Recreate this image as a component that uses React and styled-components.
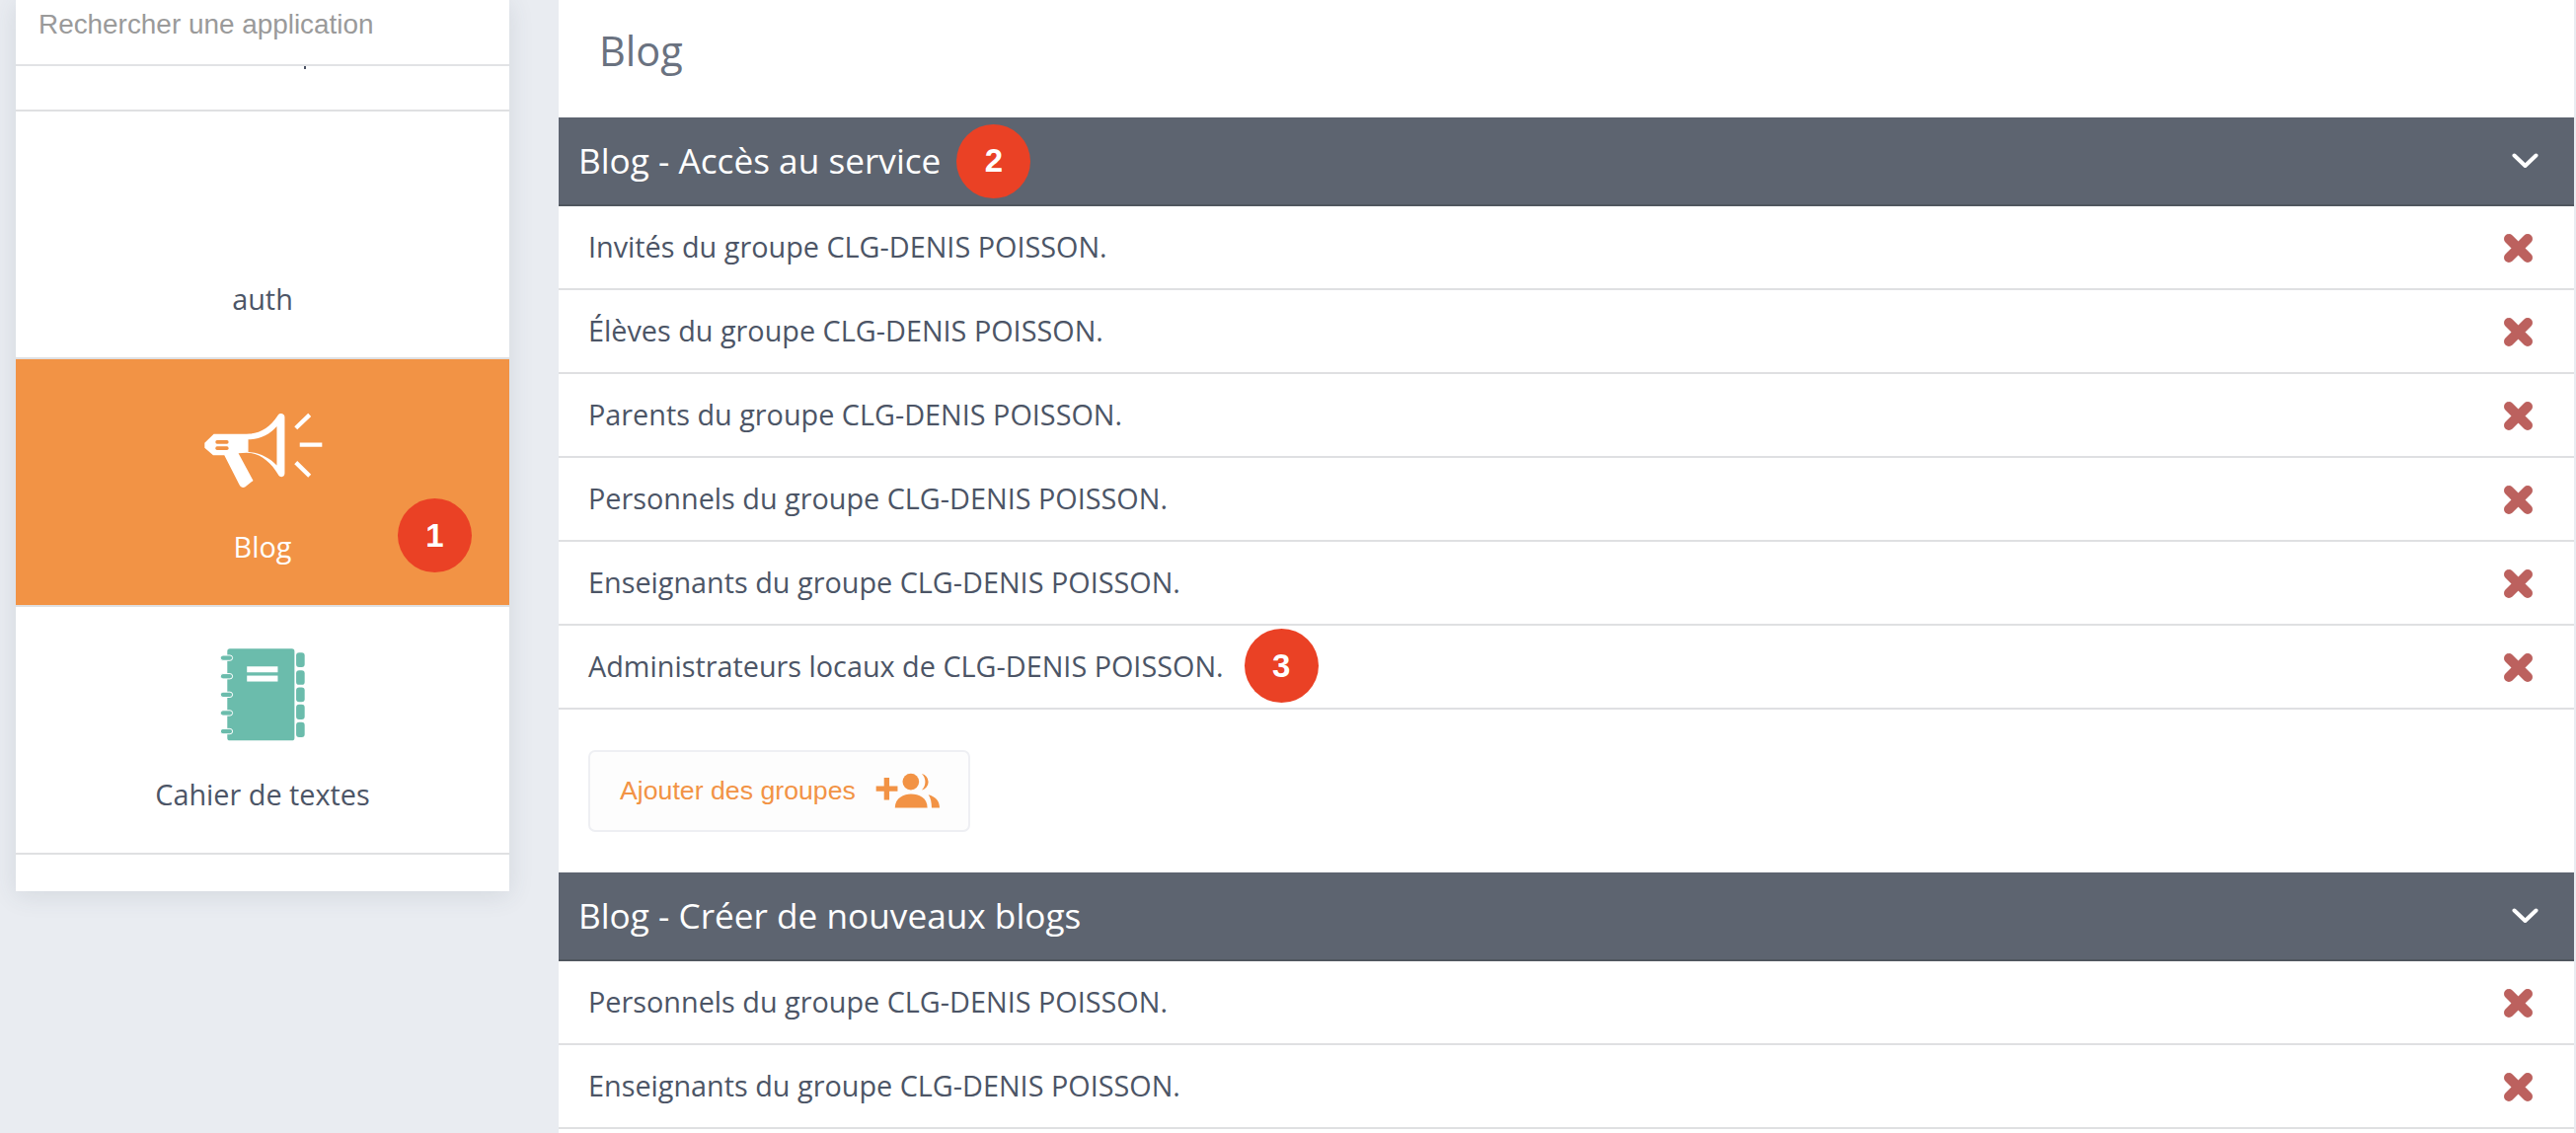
import styled, { createGlobalStyle } from 'styled-components';

const GlobalStyle = createGlobalStyle`
    html, body {
        margin: 0;
        padding: 0;
        background: #e9ecf1;
        font-family: "Open Sans", "Liberation Sans", sans-serif;
    }
`;

const Page = styled.div`
    display: flex;
    align-items: flex-start;
    height: 1148px;
    padding: 0 2px 0 16px;
    box-sizing: border-box;
    overflow: hidden;
`;

const Sidebar = styled.aside`
    flex: 0 0 500px;
    height: 903px;
    background: #fff;
    box-shadow: 0 4px 24px rgba(60, 70, 90, 0.12);
`;

const Search = styled.div`
    height: 65px;
    padding-left: 23px;
    border-bottom: 2px solid #e2e3e5;
    font-family: "Liberation Sans", Arial, sans-serif;
    font-size: 27.9px;
    line-height: 49px;
    color: #9a9a9a;
`;

const Strip = styled.div`
    height: 44px;
    border-bottom: 2px solid #dfe0e2;
`;

const ClippedTail = styled.span`
    display: block;
    width: 2px;
    height: 3px;
    margin-left: 292px;
    background: #4a5263;
`;

const AppItem = styled.div`
    position: relative;
    height: 249px;
    border-bottom: 2px solid #dfe0e2;
    display: flex;
    flex-direction: column;
    align-items: center;
    background: ${(p) => (p.$active ? '#f29345' : '#fff')};
    color: ${(p) => (p.$active ? '#fff' : '#4c5566')};
`;

const AppIcon = styled.div`
    height: 172px;
    padding-top: 5px;
    box-sizing: border-box;
    display: flex;
    align-items: center;
    justify-content: center;
`;

const AppLabel = styled.div`
    font-size: 28.8px;
    line-height: 36px;
`;

const Badge = styled.span`
    flex: none;
    display: flex;
    align-items: center;
    justify-content: center;
    width: 75px;
    height: 75px;
    margin-left: ${(p) => p.$gap || 16}px;
    border-radius: 50%;
    background: #ea4125;
    color: #fff;
    font-family: "Liberation Sans", Arial, sans-serif;
    font-weight: 700;
    font-size: 33px;
`;

const CornerBadge = styled(Badge)`
    position: absolute;
    left: 387px;
    top: 141px;
    margin: 0;
`;

const Main = styled.main`
    flex: 1;
    height: 1148px;
    margin-left: 50px;
    background: #fff;
    overflow: hidden;
`;

const Title = styled.h1`
    height: 119px;
    margin: 0;
    padding: 23px 0 0 41px;
    box-sizing: border-box;
    font-size: 41.5px;
    font-weight: 400;
    line-height: 56px;
    color: #6a7280;
`;

const SectionHeader = styled.div`
    height: 90px;
    padding: 0 36px 0 20px;
    box-sizing: border-box;
    display: flex;
    align-items: center;
    background: #5d6470;
    border-bottom: 2px solid #50565f;
    color: #fff;
`;

const SectionTitle = styled.h2`
    margin: 0 0 2px;
    font-size: 35.2px;
    font-weight: 400;
`;

const Chevron = styled.svg`
    margin-left: auto;
`;

const Row = styled.div`
    height: 85px;
    padding: 0 42px 2px 30px;
    box-sizing: border-box;
    display: flex;
    align-items: center;
    border-bottom: 2px solid #dfe0e2;
    font-size: 28.8px;
    color: #4c5566;
`;

const RemoveIcon = styled.svg`
    margin: 3px 0 0 auto;
`;

const Actions = styled.div`
    padding: 41px 30px;
`;

const AddButton = styled.button`
    display: flex;
    align-items: center;
    gap: 19px;
    width: 387px;
    height: 83px;
    padding: 0 0 0 30px;
    box-sizing: border-box;
    border: 2px solid #eeeff3;
    border-radius: 7px;
    background: #fdfdfd;
    color: #f29345;
    font-family: "Liberation Sans", Arial, sans-serif;
    font-size: 26.7px;
`;

const Megaphone = () => (
    <svg width="123" height="90" viewBox="105 53 370 270">
        <path
            fill="#fff"
            fillRule="evenodd"
            d="M140 148 L240 148 C280 148 310 130 335 92 C340 82 356 85 356 96 L356 268 C356 282 340 282 335 270 C315 235 280 205 240 205 L215 207 L260 290 L235 310 C228 313 222 310 218 303 L172 213 L138 213 L112 190 L112 175 Z M245 165 L245 203 C280 205 310 220 332 244 L332 125 C310 150 280 165 245 165 Z"
        />
        <rect x="145" y="167" width="40" height="11" rx="5" fill="#f29345" />
        <rect x="145" y="186" width="40" height="11" rx="5" fill="#f29345" />
        <path
            fill="none"
            stroke="#fff"
            strokeWidth="13"
            d="M390 130 L432 90 M402 181 L470 181 M390 235 L432 276"
        />
    </svg>
);

const Notebook = () => (
    <svg width="92" height="98" viewBox="60 45 275 295">
        <rect x="90" y="52" width="205" height="280" rx="8" fill="#6bbcac" />
        {[80, 136, 192, 248, 304].map((y) => (
            <rect key={y} x="69" y={y - 8} width="37" height="16" rx="8" fill="#6bbcac" stroke="#fff" strokeWidth="3" />
        ))}
        {[[64, 44], [118, 44], [170, 44], [222, 46], [276, 46]].map(([y, h]) => (
            <rect key={y} x="300" y={y} width="26" height={h} rx="9" fill="#6bbcac" />
        ))}
        <rect x="150" y="106" width="94" height="18" fill="#fff" />
        <rect x="150" y="134" width="94" height="18" fill="#fff" />
    </svg>
);

const AddGroups = () => (
    <svg width="67" height="37" viewBox="135 40 200 110" fill="#f29345">
        <path d="M164 55 H180 V80 H205 V96 H180 V122 H164 V96 H140 V80 H164 Z" />
        <circle cx="245" cy="67" r="25" />
        <path d="M197 146 C197 115 225 104 245 104 C270 104 295 115 295 146 Z" />
        <path d="M278 43 A25 25 0 0 1 278 92 C292 80 292 55 278 43 Z" />
        <path d="M298 106 C320 112 332 125 332 146 L308 146 C308 130 305 115 298 106 Z" />
    </svg>
);

const ChevronDown = () => (
    <Chevron width="27" height="16" viewBox="0 0 27 16">
        <path d="M2.5 2.5 L13.5 13 L24.5 2.5" fill="none" stroke="#fff" strokeWidth="4" strokeLinecap="round" strokeLinejoin="round" />
    </Chevron>
);

const Remove = () => (
    <RemoveIcon width="29" height="29" viewBox="0 0 29 29">
        <path d="M5 5 L24 24 M24 5 L5 24" stroke="#bc615e" strokeWidth="10" strokeLinecap="round" />
    </RemoveIcon>
);

const accessGroups = [
    'Invités du groupe CLG-DENIS POISSON.',
    'Élèves du groupe CLG-DENIS POISSON.',
    'Parents du groupe CLG-DENIS POISSON.',
    'Personnels du groupe CLG-DENIS POISSON.',
    'Enseignants du groupe CLG-DENIS POISSON.',
];

const creatorGroups = [
    'Personnels du groupe CLG-DENIS POISSON.',
    'Enseignants du groupe CLG-DENIS POISSON.',
];

const App = () => {
    return (
        <Page>
            <GlobalStyle />
            <Sidebar>
                <Search>Rechercher une application</Search>
                <Strip>
                    <ClippedTail />
                </Strip>
                <AppItem>
                    <AppIcon />
                    <AppLabel>auth</AppLabel>
                </AppItem>
                <AppItem $active>
                    <AppIcon>
                        <Megaphone />
                    </AppIcon>
                    <AppLabel>Blog</AppLabel>
                    <CornerBadge>1</CornerBadge>
                </AppItem>
                <AppItem>
                    <AppIcon>
                        <Notebook />
                    </AppIcon>
                    <AppLabel>Cahier de textes</AppLabel>
                </AppItem>
            </Sidebar>
            <Main>
                <Title>Blog</Title>
                <SectionHeader>
                    <SectionTitle>Blog - Accès au service</SectionTitle>
                    <Badge>2</Badge>
                    <ChevronDown />
                </SectionHeader>
                {accessGroups.map((name) => (
                    <Row key={name}>
                        {name}
                        <Remove />
                    </Row>
                ))}
                <Row>
                    Administrateurs locaux de CLG-DENIS POISSON.
                    <Badge $gap={21}>3</Badge>
                    <Remove />
                </Row>
                <Actions>
                    <AddButton>
                        Ajouter des groupes
                        <AddGroups />
                    </AddButton>
                </Actions>
                <SectionHeader>
                    <SectionTitle>Blog - Créer de nouveaux blogs</SectionTitle>
                    <ChevronDown />
                </SectionHeader>
                {creatorGroups.map((name) => (
                    <Row key={name}>
                        {name}
                        <Remove />
                    </Row>
                ))}
            </Main>
        </Page>
    );
};

export default App;
